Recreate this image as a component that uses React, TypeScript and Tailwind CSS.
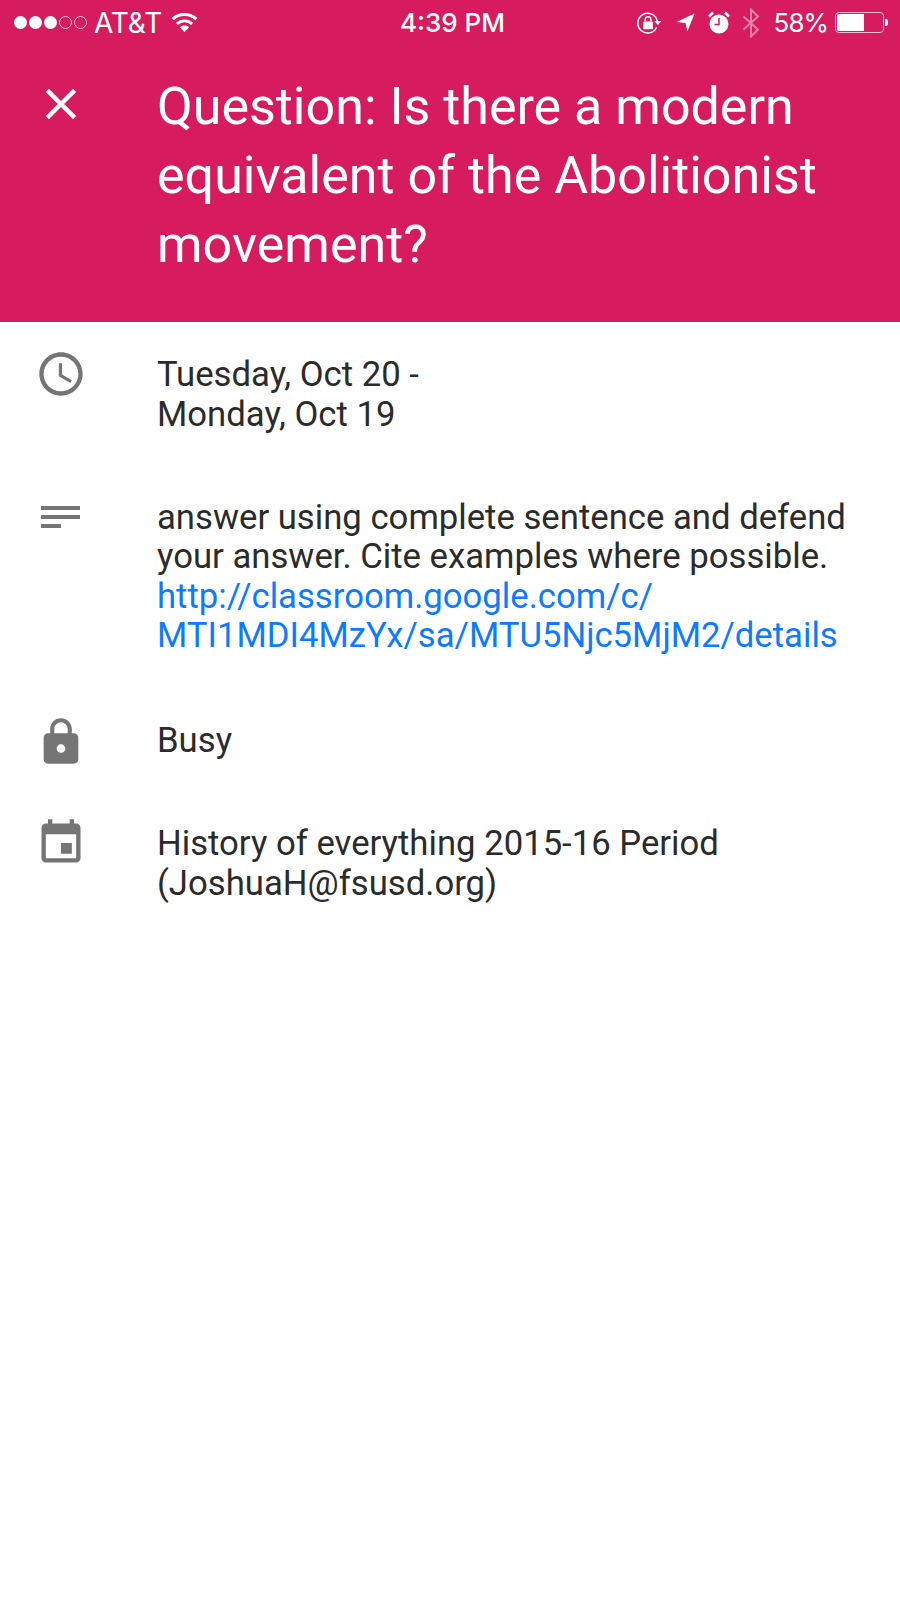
import type { ReactNode } from 'react';
import { MdAccessTime, MdClose, MdEvent, MdLock } from 'react-icons/md';

const Signal = () => (
  <div className="flex items-center gap-[2px]">
    <span className="w-[13px] h-[13px] rounded-full bg-white" />
    <span className="w-[13px] h-[13px] rounded-full bg-white" />
    <span className="w-[13px] h-[13px] rounded-full bg-white" />
    <span className="w-[13px] h-[13px] rounded-full border border-white/70" />
    <span className="w-[13px] h-[13px] rounded-full border border-white/70" />
  </div>
);

const Wifi = () => (
  <svg width="27" height="20" viewBox="0 0 28 21" fill="none" stroke="white" strokeWidth="3">
    <path d="M1.500 7.500C8.500 1 19.500 1 26.500 7.500" />
    <path d="M6 12.500C10.500 8.200 17.500 8.200 22 12.500" />
    <path d="M14 21l-4.800-5c2.600-2.400 7-2.400 9.600 0z" fill="white" stroke="none" />
  </svg>
);

const RotationLock = () => (
  <svg width="25" height="22" viewBox="0 0 26 23" fill="none">
    <path d="M20.500 16A10.300 10.300 0 1 1 21.200 9.500" stroke="white" strokeWidth="1.500" />
    <path d="M18 9.500h7.500l-3.700 4z" fill="white" />
    <rect x="6.500" y="10" width="10" height="8" rx="1" fill="white" />
    <path d="M8.500 10V8a3 3 0 0 1 6 0v2" stroke="white" strokeWidth="1.500" />
  </svg>
);

const Arrow = () => (
  <svg width="19" height="19" viewBox="0 0 20 20">
    <path d="M0.500 9.500L19.500 0.500L12 19.500L10 10.500z" fill="white" />
  </svg>
);

const Alarm = () => (
  <svg width="22" height="23" viewBox="0 0 22 23">
    <circle cx="11" cy="13" r="9.500" fill="white" />
    <path d="M1 5.500L5 1.500M21 5.500L17 1.500" stroke="white" strokeWidth="2.500" />
    <path d="M11 7v6.500H6.500" stroke="#d61b5e" strokeWidth="1.500" fill="none" />
  </svg>
);

const Bluetooth = () => (
  <svg width="18" height="30" viewBox="0 0 18 30" fill="none" stroke="white" strokeOpacity="0.45" strokeWidth="2">
    <path d="M1.500 8.500L16 21.500L9 28.500V1.500L16 8.500L1.500 21.500" />
  </svg>
);

const Battery = () => (
  <div className="flex items-center">
    <div className="w-[49px] h-[21px] rounded-[4px] border border-white/70 p-[1px]">
      <div className="w-[27px] h-full rounded-l-[2px] bg-white" />
    </div>
    <div className="w-[3px] h-[7px] rounded-r-[2px] bg-white ml-[1px]" />
  </div>
);

const StatusBar = () => (
  <div className="h-[45px] flex items-center relative text-white text-[26px] font-['Inter','Liberation_Sans',sans-serif] pl-[14px] pr-[12px]">
    <Signal />
    <span className="ml-[7px] text-[28px] tracking-[-0.1px]">AT&amp;T</span>
    <div className="ml-[9px] -mt-[2px]"><Wifi /></div>
    <span className="absolute left-[400px] font-medium">4:39 PM</span>
    <div className="ml-auto flex items-center">
      <RotationLock />
      <div className="ml-[14px]"><Arrow /></div>
      <div className="ml-[13px]"><Alarm /></div>
      <div className="ml-[12px]"><Bluetooth /></div>
      <span className="ml-[14px] tracking-[-1px]">58%</span>
      <div className="ml-[7px]"><Battery /></div>
    </div>
  </div>
);

const Subject = () => (
  <svg width="52" height="52" viewBox="0 0 52 52" fill="currentColor">
    <rect x="6" y="15" width="39" height="4" />
    <rect x="6" y="24" width="39" height="4" />
    <rect x="6" y="33" width="20" height="4" />
  </svg>
);

type RowProps = {
  icon: ReactNode;
  children: ReactNode;
};

const Row = ({ icon, children }: RowProps) => (
  <div className="flex">
    <div className="w-[157px] h-[40px] shrink-0 pl-[35px] text-[#757575]">
      <div className="-mt-[6px]">{icon}</div>
    </div>
    <div className="text-[34.7px] leading-[40px] text-[#2b2b2b]">{children}</div>
  </div>
);

export default function App() {
  return (
    <div className="w-[900px] h-[1600px] bg-white font-['Roboto',sans-serif]">
      <div className="h-[322px] bg-[#d61b5e]">
        <StatusBar />
        <div className="flex pt-[27px]">
          <div className="w-[157px] shrink-0 pl-[35px] pt-[6px]">
            <MdClose size={52} color="white" />
          </div>
          <h1 className="text-[52px] leading-[69px] font-normal text-white">
            Question: Is there a modern<br />
            equivalent of the Abolitionist<br />
            movement?
          </h1>
        </div>
      </div>
      <div className="flex flex-col gap-[63px] pt-[32px]">
        <Row icon={<MdAccessTime size={52} />}>
          Tuesday, Oct 20 -<br />
          Monday, Oct 19
        </Row>
        <Row icon={<Subject />}>
          <div className="leading-[39.4px] mt-[1px] mb-[1px]">
            answer using complete sentence and defend<br />
            your answer. Cite examples where possible.<br />
            <span className="text-[#0d7bff]">
              http://classroom.google.com/c/<br />
              MTI1MDI4MzYx/sa/MTU5Njc5MjM2/details
            </span>
          </div>
        </Row>
        <Row icon={<MdLock size={52} className="mt-[2px]" />}>Busy</Row>
        <Row icon={<MdEvent size={52} />}>
          History of everything 2015-16 Period<br />
          (JoshuaH@fsusd.org)
        </Row>
      </div>
    </div>
  );
}
